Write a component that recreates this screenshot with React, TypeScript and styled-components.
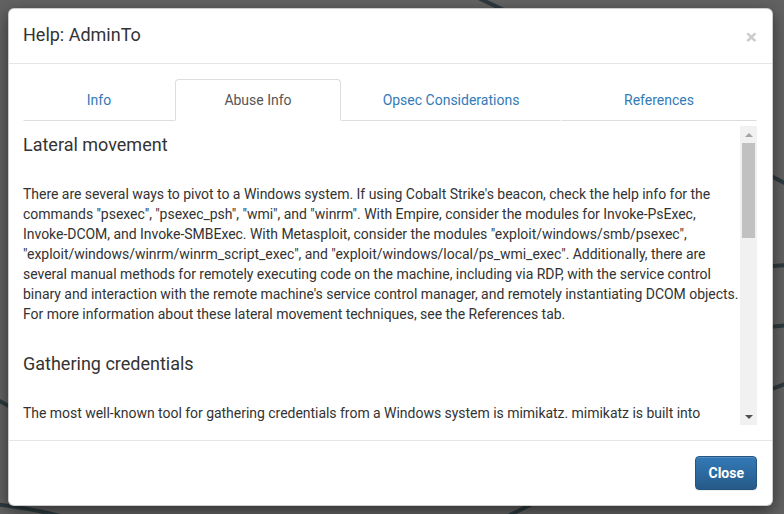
import styled, { createGlobalStyle } from "styled-components";

const GlobalStyle = createGlobalStyle`
  html, body {
    margin: 0;
    padding: 0;
    background: #626262;
    font-family: Roboto, "Liberation Sans", Arial, sans-serif;
    color: #333;
  }
`;

const Backdrop = styled.div`
  position: relative;
  height: 514px;
  padding: 8px;
  box-sizing: border-box;
  overflow: hidden;
`;

const GraphLines = styled.svg`
  position: absolute;
  inset: 0;
  width: 100%;
  height: 100%;
`;

const Modal = styled.div`
  position: relative;
  width: 765px;
  background: #fff;
  border: 1px solid rgba(0, 0, 0, 0.2);
  border-radius: 6px;
  box-shadow: 0 5px 15px rgba(0, 0, 0, 0.5);
  box-sizing: border-box;
`;

const Header = styled.div`
  display: flex;
  align-items: flex-start;
  justify-content: space-between;
  padding: 13px 15px 15px 14px;
  border-bottom: 1px solid #e5e5e5;
`;

const Title = styled.h4`
  margin: 0;
  font-size: 18px;
  font-weight: 400;
  line-height: 26px;
  color: #333;
`;

const CloseX = styled.button`
  border: 0;
  background: none;
  padding: 0;
  margin-top: 5px;
  font-family: inherit;
  font-size: 21px;
  font-weight: 700;
  line-height: 1;
  color: #000;
  opacity: 0.2;
  cursor: pointer;
`;

const Body = styled.div`
  padding: 15px 15px 15px 14px;
`;

const Tabs = styled.ul`
  display: grid;
  grid-template-columns: 152px 166px 220px 1fr;
  margin: 0;
  padding: 0;
  list-style: none;
`;

const Tab = styled.li<{ $active?: boolean }>`
  text-align: center;
  padding: 10px 15px;
  font-size: 14px;
  line-height: 20px;
  color: ${(p) => (p.$active ? "#555" : "#337ab7")};
  border: 1px solid ${(p) => (p.$active ? "#ddd" : "transparent")};
  border-bottom-color: ${(p) => (p.$active ? "#fff" : "#ddd")};
  border-radius: 4px 4px 0 0;
  cursor: pointer;
  white-space: nowrap;
`;

const Pane = styled.div`
  display: flex;
  height: 299px;
  margin-top: 5px;
  overflow: hidden;
`;

const Article = styled.div`
  flex: 1;
  min-width: 0;
  padding-top: 6px;
`;

const Section = styled.section`
  & + & {
    margin-top: 27px;
  }
`;

const Heading = styled.h4`
  margin: 0 0 26px;
  font-size: 18px;
  font-weight: 400;
  line-height: 26px;
  color: #333;
`;

const Paragraph = styled.p`
  margin: 0;
  font-size: 14px;
  line-height: 20px;
  letter-spacing: -0.03px;
  color: #333;
`;

const Line = styled.span`
  display: block;
  white-space: nowrap;
`;

const ScrollTrack = styled.div`
  width: 17px;
  flex: none;
  display: flex;
  flex-direction: column;
  background: #f1f1f1;
`;

const ScrollButton = styled.div<{ $down?: boolean }>`
  height: 17px;
  display: flex;
  align-items: center;
  justify-content: center;

  &::before {
    content: "";
    width: 0;
    height: 0;
    border-left: 4px solid transparent;
    border-right: 4px solid transparent;
    ${(p) =>
      p.$down
        ? "border-top: 4px solid #505050;"
        : "border-bottom: 4px solid #a3a3a3;"}
  }
`;

const ScrollGutter = styled.div`
  flex: 1;
  padding: 0 2px;
`;

const Thumb = styled.div`
  height: 95px;
  background: #c1c1c1;
`;

const Footer = styled.div`
  display: flex;
  justify-content: flex-end;
  padding: 15px;
  border-top: 1px solid #e5e5e5;
`;

const PrimaryButton = styled.button`
  padding: 6px 12px;
  font-family: inherit;
  font-size: 14px;
  font-weight: 700;
  line-height: 20px;
  color: #fff;
  background-image: linear-gradient(to bottom, #337ab7 0, #265a88 100%);
  border: 1px solid #245580;
  border-radius: 4px;
  box-shadow: inset 0 1px 0 rgba(255, 255, 255, 0.15), 0 1px 1px rgba(0, 0, 0, 0.075);
  cursor: pointer;
`;

const tabs = ["Info", "Abuse Info", "Opsec Considerations", "References"];

const sections = [
  {
    title: "Lateral movement",
    lines: [
      "There are several ways to pivot to a Windows system. If using Cobalt Strike's beacon, check the help info for the",
      'commands "psexec", "psexec_psh", "wmi", and "winrm". With Empire, consider the modules for Invoke-PsExec,',
      'Invoke-DCOM, and Invoke-SMBExec. With Metasploit, consider the modules "exploit/windows/smb/psexec",',
      '"exploit/windows/winrm/winrm_script_exec", and "exploit/windows/local/ps_wmi_exec". Additionally, there are',
      "several manual methods for remotely executing code on the machine, including via RDP, with the service control",
      "binary and interaction with the remote machine's service control manager, and remotely instantiating DCOM objects.",
      "For more information about these lateral movement techniques, see the References tab.",
    ],
  },
  {
    title: "Gathering credentials",
    lines: [
      "The most well-known tool for gathering credentials from a Windows system is mimikatz. mimikatz is built into",
    ],
  },
];

const App: React.FC = () => {
  return (
    <>
      <GlobalStyle />
      <Backdrop>
        <GraphLines viewBox="0 0 784 514" preserveAspectRatio="none">
          <g stroke="#2d3a3f" strokeWidth="4" fill="none" strokeLinecap="round">
            <path d="M470 -6 L512 14" />
            <path d="M740 160 Q760 170 790 186" />
            <path d="M740 268 L790 265" />
            <path d="M740 330 L790 325" />
            <path d="M740 400 Q765 392 790 382" />
            <path d="M-6 398 L20 412" />
            <path d="M-6 504 Q30 508 60 516" />
            <path d="M500 520 L540 500" />
          </g>
        </GraphLines>
        <Modal>
          <Header>
            <Title>Help: AdminTo</Title>
            <CloseX aria-label="Close">×</CloseX>
          </Header>
          <Body>
            <Tabs>
              {tabs.map((t) => (
                <Tab key={t} $active={t === "Abuse Info"}>
                  {t}
                </Tab>
              ))}
            </Tabs>
            <Pane>
              <Article>
                {sections.map((s) => (
                  <Section key={s.title}>
                    <Heading>{s.title}</Heading>
                    <Paragraph>
                      {s.lines.map((l, i) => (
                        <Line key={i}>{l}</Line>
                      ))}
                    </Paragraph>
                  </Section>
                ))}
              </Article>
              <ScrollTrack>
                <ScrollButton />
                <ScrollGutter>
                  <Thumb />
                </ScrollGutter>
                <ScrollButton $down />
              </ScrollTrack>
            </Pane>
          </Body>
          <Footer>
            <PrimaryButton>Close</PrimaryButton>
          </Footer>
        </Modal>
      </Backdrop>
    </>
  );
};

export default App;
